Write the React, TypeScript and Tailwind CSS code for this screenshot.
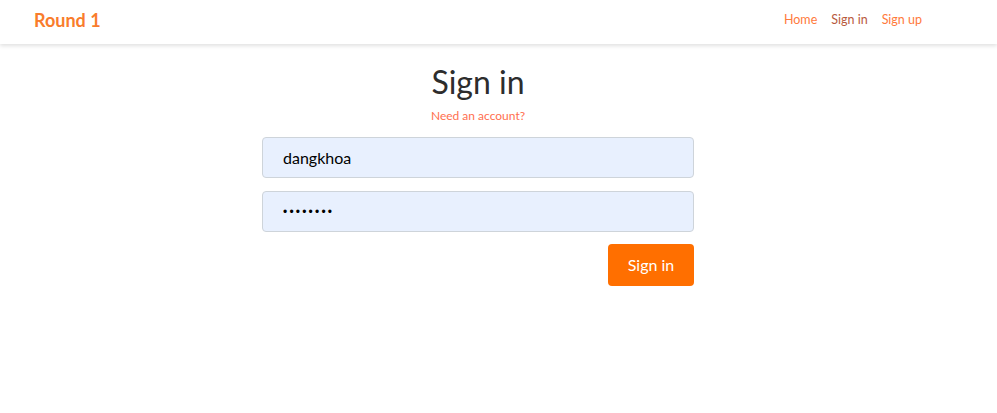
import { useState } from "react";

const App = () => {
  const [username, setUsername] = useState("dangkhoa");
  const [password, setPassword] = useState("password");

  return (
    <div className="min-h-screen bg-white font-['Lato',sans-serif] text-[#333]">
      <nav className="flex h-[44px] items-center justify-between bg-white pb-[3px] pl-[34px] pr-[75px] shadow-[0_2px_4px_rgba(0,0,0,0.12)]">
        <a href="#" className="text-[18px] font-bold text-[#f97c2c]">
          Round 1
        </a>
        <div className="flex items-center gap-[14px] text-[12.5px]">
          <a href="#" className="text-[#ff7a3c]">
            Home
          </a>
          <a href="#" className="text-[#b85a3e]">
            Sign in
          </a>
          <a href="#" className="text-[#ff7a3c]">
            Sign up
          </a>
        </div>
      </nav>

      <div className="ml-[262px] w-[432px] pt-[16px]">
        <h1 className="text-center text-[32px] leading-[44px] text-[#2d2d2d]">
          Sign in
        </h1>
        <p className="mt-[3px] text-center text-[12px] text-[#ff6f4f]">
          <a href="#">Need an account?</a>
        </p>

        <form className="mt-[12px] flex flex-col">
          <input
            type="text"
            value={username}
            onChange={(e) => setUsername(e.target.value)}
            className="h-[41px] rounded-[4px] border border-[#ced4da] bg-[#e8f0fe] px-[20px] text-[16px] text-black outline-none"
          />
          <input
            type="password"
            value={password}
            onChange={(e) => setPassword(e.target.value)}
            className="mt-[13px] h-[41px] rounded-[4px] border border-[#ced4da] bg-[#e8f0fe] px-[20px] font-['Liberation_Sans',sans-serif] text-[12px] tracking-[2.2px] text-black outline-none"
          />
          <div className="mt-[12px] flex justify-end">
            <button
              type="button"
              className="h-[42px] w-[86px] rounded-[4px] bg-[#ff6f00] text-[16px] text-white"
            >
              Sign in
            </button>
          </div>
        </form>
      </div>
    </div>
  );
};

export default App;
